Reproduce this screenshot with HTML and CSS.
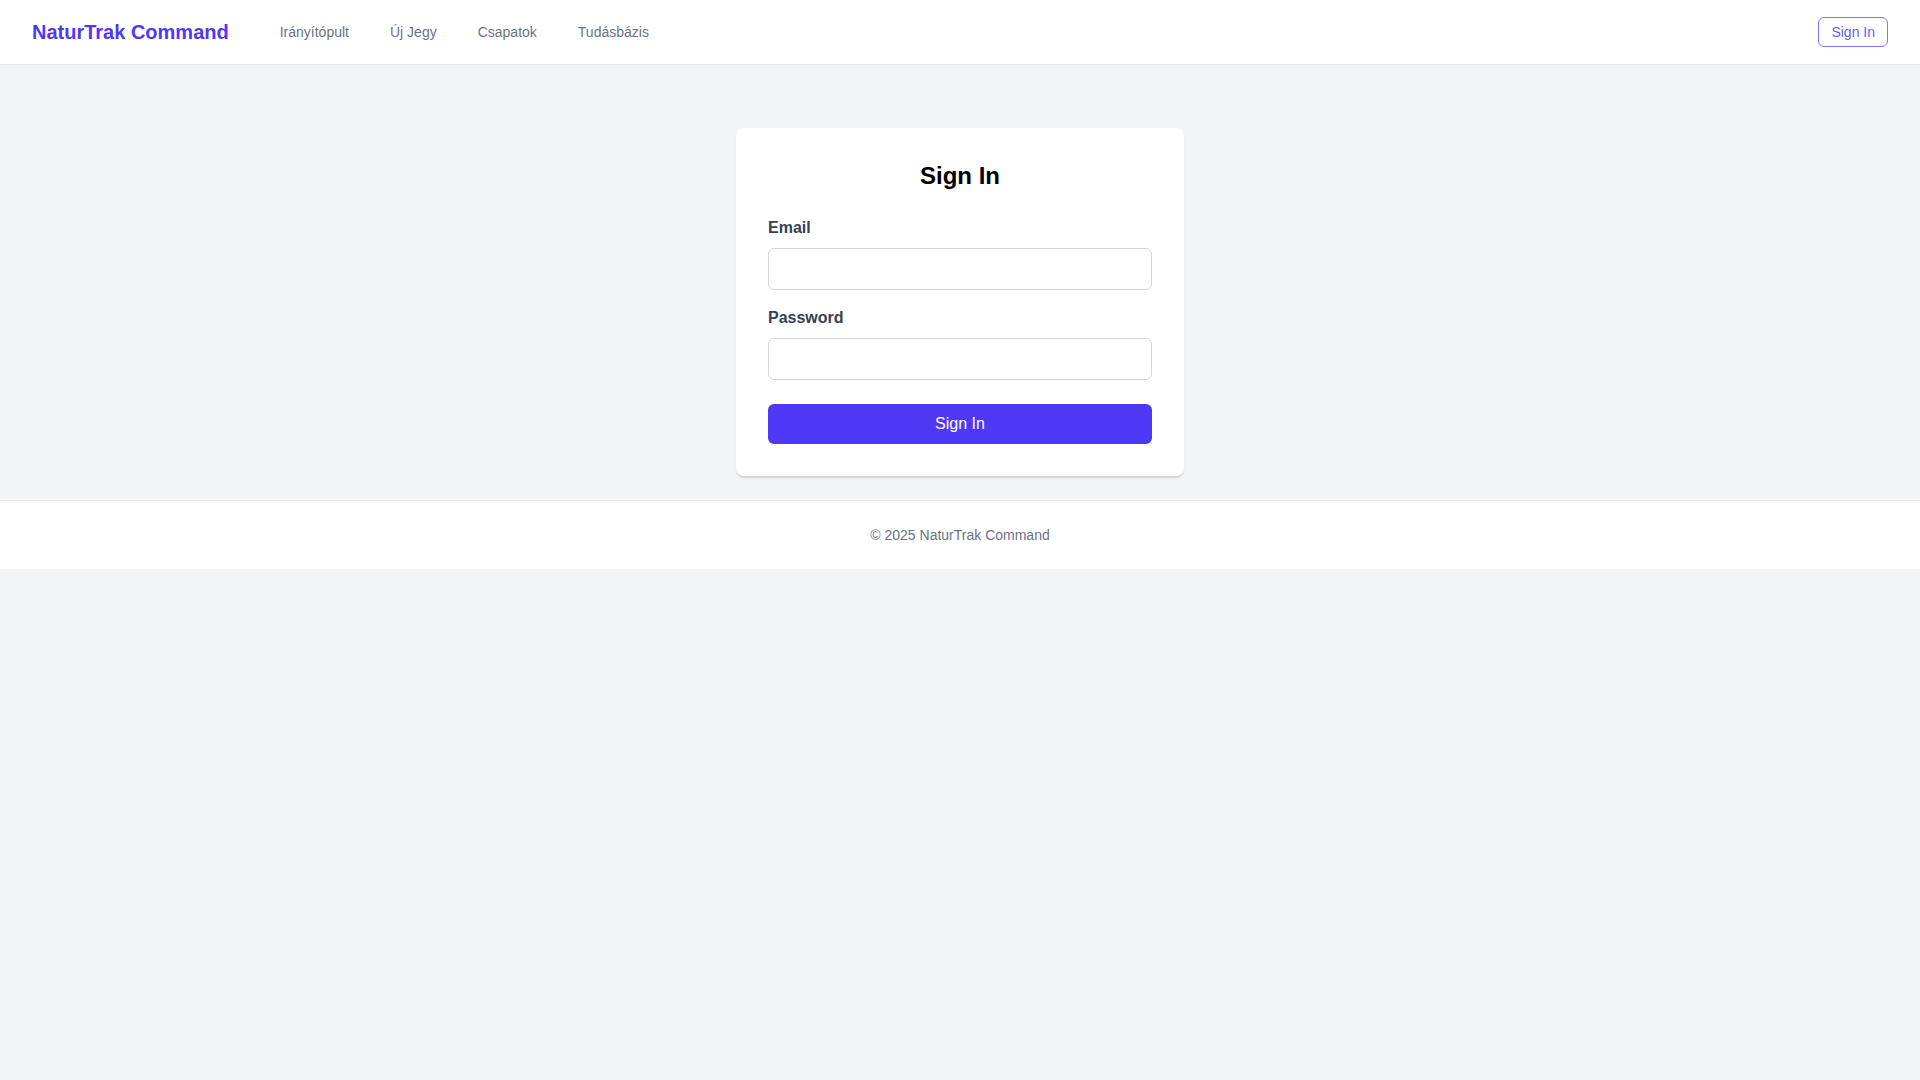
FILE: index.html
```html
<!DOCTYPE html>
<html lang="hu">
<head>
  <meta charset="UTF-8">
  <meta name="viewport" content="width=device-width, initial-scale=1.0">
  <title>NaturTrak Command - Sign In</title>
  <link rel="stylesheet" href="styles.css">
</head>
<body>
  <header class="topbar">
    <a class="brand" href="#">NaturTrak Command</a>
    <nav class="main-nav">
      <a href="#">Irányítópult</a>
      <a href="#">Új Jegy</a>
      <a href="#">Csapatok</a>
      <a href="#">Tudásbázis</a>
    </nav>
    <a class="btn-outline" href="#">Sign In</a>
  </header>

  <main class="content">
    <div class="card">
      <h2>Sign In</h2>
      <form class="signin-form">
        <div class="field">
          <label for="email">Email</label>
          <input type="email" id="email">
        </div>
        <div class="field">
          <label for="password">Password</label>
          <input type="password" id="password">
        </div>
        <button type="submit">Sign In</button>
      </form>
    </div>
  </main>

  <footer class="site-footer">
    &copy; 2025 NaturTrak Command
  </footer>
</body>
</html>
```

FILE: styles.css
```css
* {
  box-sizing: border-box;
}
body {
  margin: 0;
  font-family: "Liberation Sans", Arial, sans-serif;
  background: #f3f4f6;
  color: #111827;
}
a {
  text-decoration: none;
}

/* header */
.topbar {
  display: flex;
  align-items: center;
  height: 65px;
  padding: 0 32px;
  background: #fff;
  border-bottom: 1px solid #e5e7eb;
}
.brand {
  font-size: 20px;
  font-weight: bold;
  color: #4f39f6;
  line-height: 28px;
}
.main-nav {
  display: flex;
  gap: 41px;
  margin-left: 51px;
}
.main-nav a {
  font-size: 14px;
  color: #6b7280;
  line-height: 20px;
}
.btn-outline {
  margin-left: auto;
  font-size: 14px;
  line-height: 20px;
  padding: 4px 12px;
  color: #615fff;
  border: 1px solid #7c7aff;
  border-radius: 6px;
}

/* sign in card */
.content {
  padding: 63px 0 24px;
}
.card {
  width: 448px;
  margin: 0 auto;
  padding: 32px;
  background: #fff;
  border-radius: 8px;
  box-shadow: 0 3px 1px -1px rgba(0, 0, 0, 0.1), 0 2px 4px rgba(0, 0, 0, 0.05);
}
.card h2 {
  margin: 0 0 24px;
  font-size: 24px;
  line-height: 32px;
  text-align: center;
  color: #000;
}
.field {
  margin-bottom: 16px;
}
.field label {
  display: block;
  margin-bottom: 8px;
  font-size: 16px;
  line-height: 24px;
  font-weight: bold;
  color: #374151;
}
.field input {
  display: block;
  width: 100%;
  height: 42px;
  padding: 8px 12px;
  font: inherit;
  border: 1px solid #d1d5db;
  border-radius: 6px;
  background: #fff;
}
.signin-form button {
  display: block;
  width: 100%;
  height: 40px;
  margin-top: 24px;
  font: inherit;
  font-size: 16px;
  color: #fff;
  background: #4f39f6;
  border: none;
  border-radius: 6px;
  cursor: pointer;
}
.signin-form .field:last-of-type {
  margin-bottom: 0;
}

/* footer */
.site-footer {
  padding: 24px 0;
  background: #fff;
  border-top: 1px solid #e5e7eb;
  text-align: center;
  font-size: 14px;
  line-height: 20px;
  color: #6b7280;
}
```
